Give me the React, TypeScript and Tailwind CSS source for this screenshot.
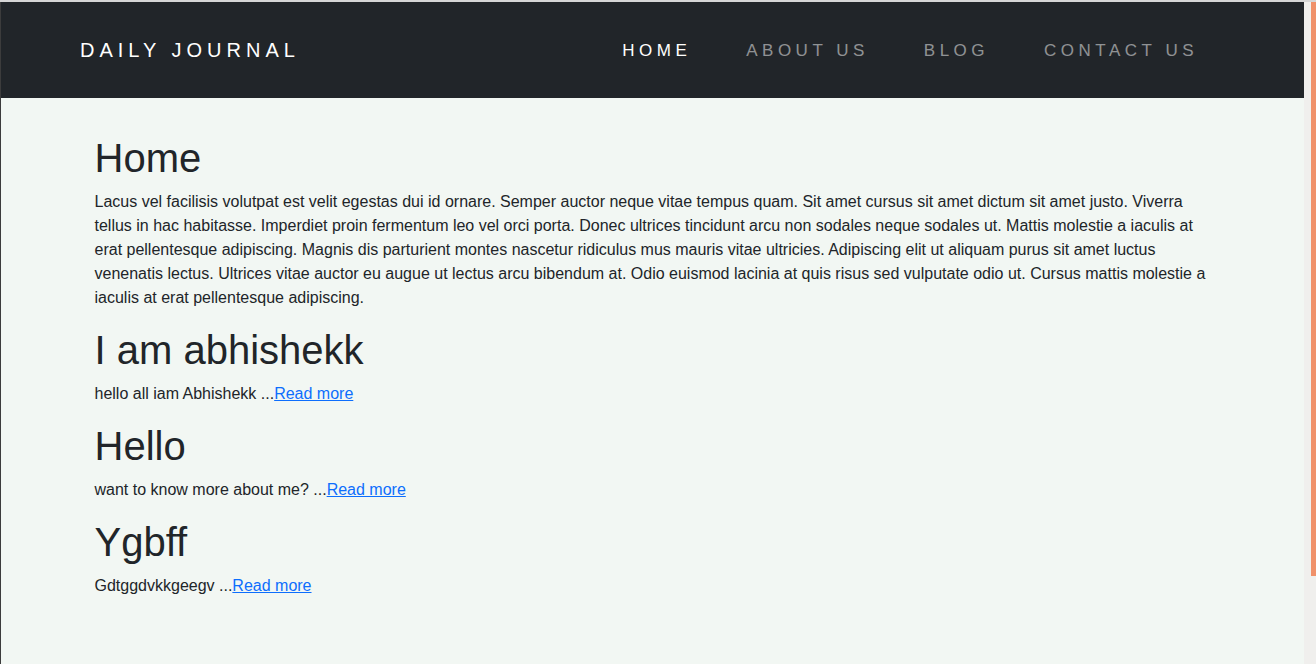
export default function App() {
  const posts = [
    { title: "I am abhishekk", body: "hello all iam Abhishekk ..." },
    { title: "Hello", body: "want to know more about me? ..." },
    { title: "Ygbff", body: "Gdtggdvkkgeegv ..." },
  ];
  return (
    <div className="flex h-[664px] w-[1316px] flex-col overflow-hidden font-['Liberation_Sans',Arial,sans-serif]">
      <div className="h-[2px] bg-[#d6d6d6]" />
      <div className="flex flex-1">
        <div className="w-px bg-[#3c3c3c]" />
        <main className="flex-1 bg-[#f2f7f3] text-[#212529]">
          <nav className="flex h-[96px] items-center bg-[#212529] pl-[79px] pr-[106px]">
            <span className="text-[20px] tracking-[5px] text-white">DAILY JOURNAL</span>
            <ul className="ml-auto mt-[2px] flex gap-[55px] text-[17px] tracking-[4.5px]">
              <li className="text-white">HOME</li>
              <li className="text-white/50">ABOUT US</li>
              <li className="text-white/50">BLOG</li>
              <li className="text-white/50">CONTACT US</li>
            </ul>
          </nav>
          <div className="mx-auto w-[1140px] px-3 pt-[36px]">
            <h1 className="mb-2 text-[40px] leading-[48px]">Home</h1>
            <p className="mb-4 text-[16px] leading-6">
              Lacus vel facilisis volutpat est velit egestas dui id ornare. Semper auctor neque vitae tempus quam. Sit amet cursus sit amet dictum sit amet justo. Viverra tellus in hac habitasse. Imperdiet proin fermentum leo vel orci porta. Donec ultrices tincidunt arcu non sodales neque sodales ut. Mattis molestie a iaculis at erat pellentesque adipiscing. Magnis dis parturient montes nascetur ridiculus mus mauris vitae ultricies. Adipiscing elit ut aliquam purus sit amet luctus venenatis lectus. Ultrices vitae auctor eu augue ut lectus arcu bibendum at. Odio euismod lacinia at quis risus sed vulputate odio ut. Cursus mattis molestie a iaculis at erat pellentesque adipiscing.
            </p>
            {posts.map((p) => (
              <div key={p.title}>
                <h1 className="mb-2 text-[40px] leading-[48px]">{p.title}</h1>
                <p className="mb-4 text-[16px] leading-6">
                  {p.body}
                  <a href="#" className="text-[#0d6efd] underline">Read more</a>
                </p>
              </div>
            ))}
          </div>
        </main>
        <div className="flex w-[12px] justify-end bg-[#f0efed]">
          <div className="h-[574px] w-[5px] bg-[#f0916a]" />
        </div>
      </div>
    </div>
  );
}
